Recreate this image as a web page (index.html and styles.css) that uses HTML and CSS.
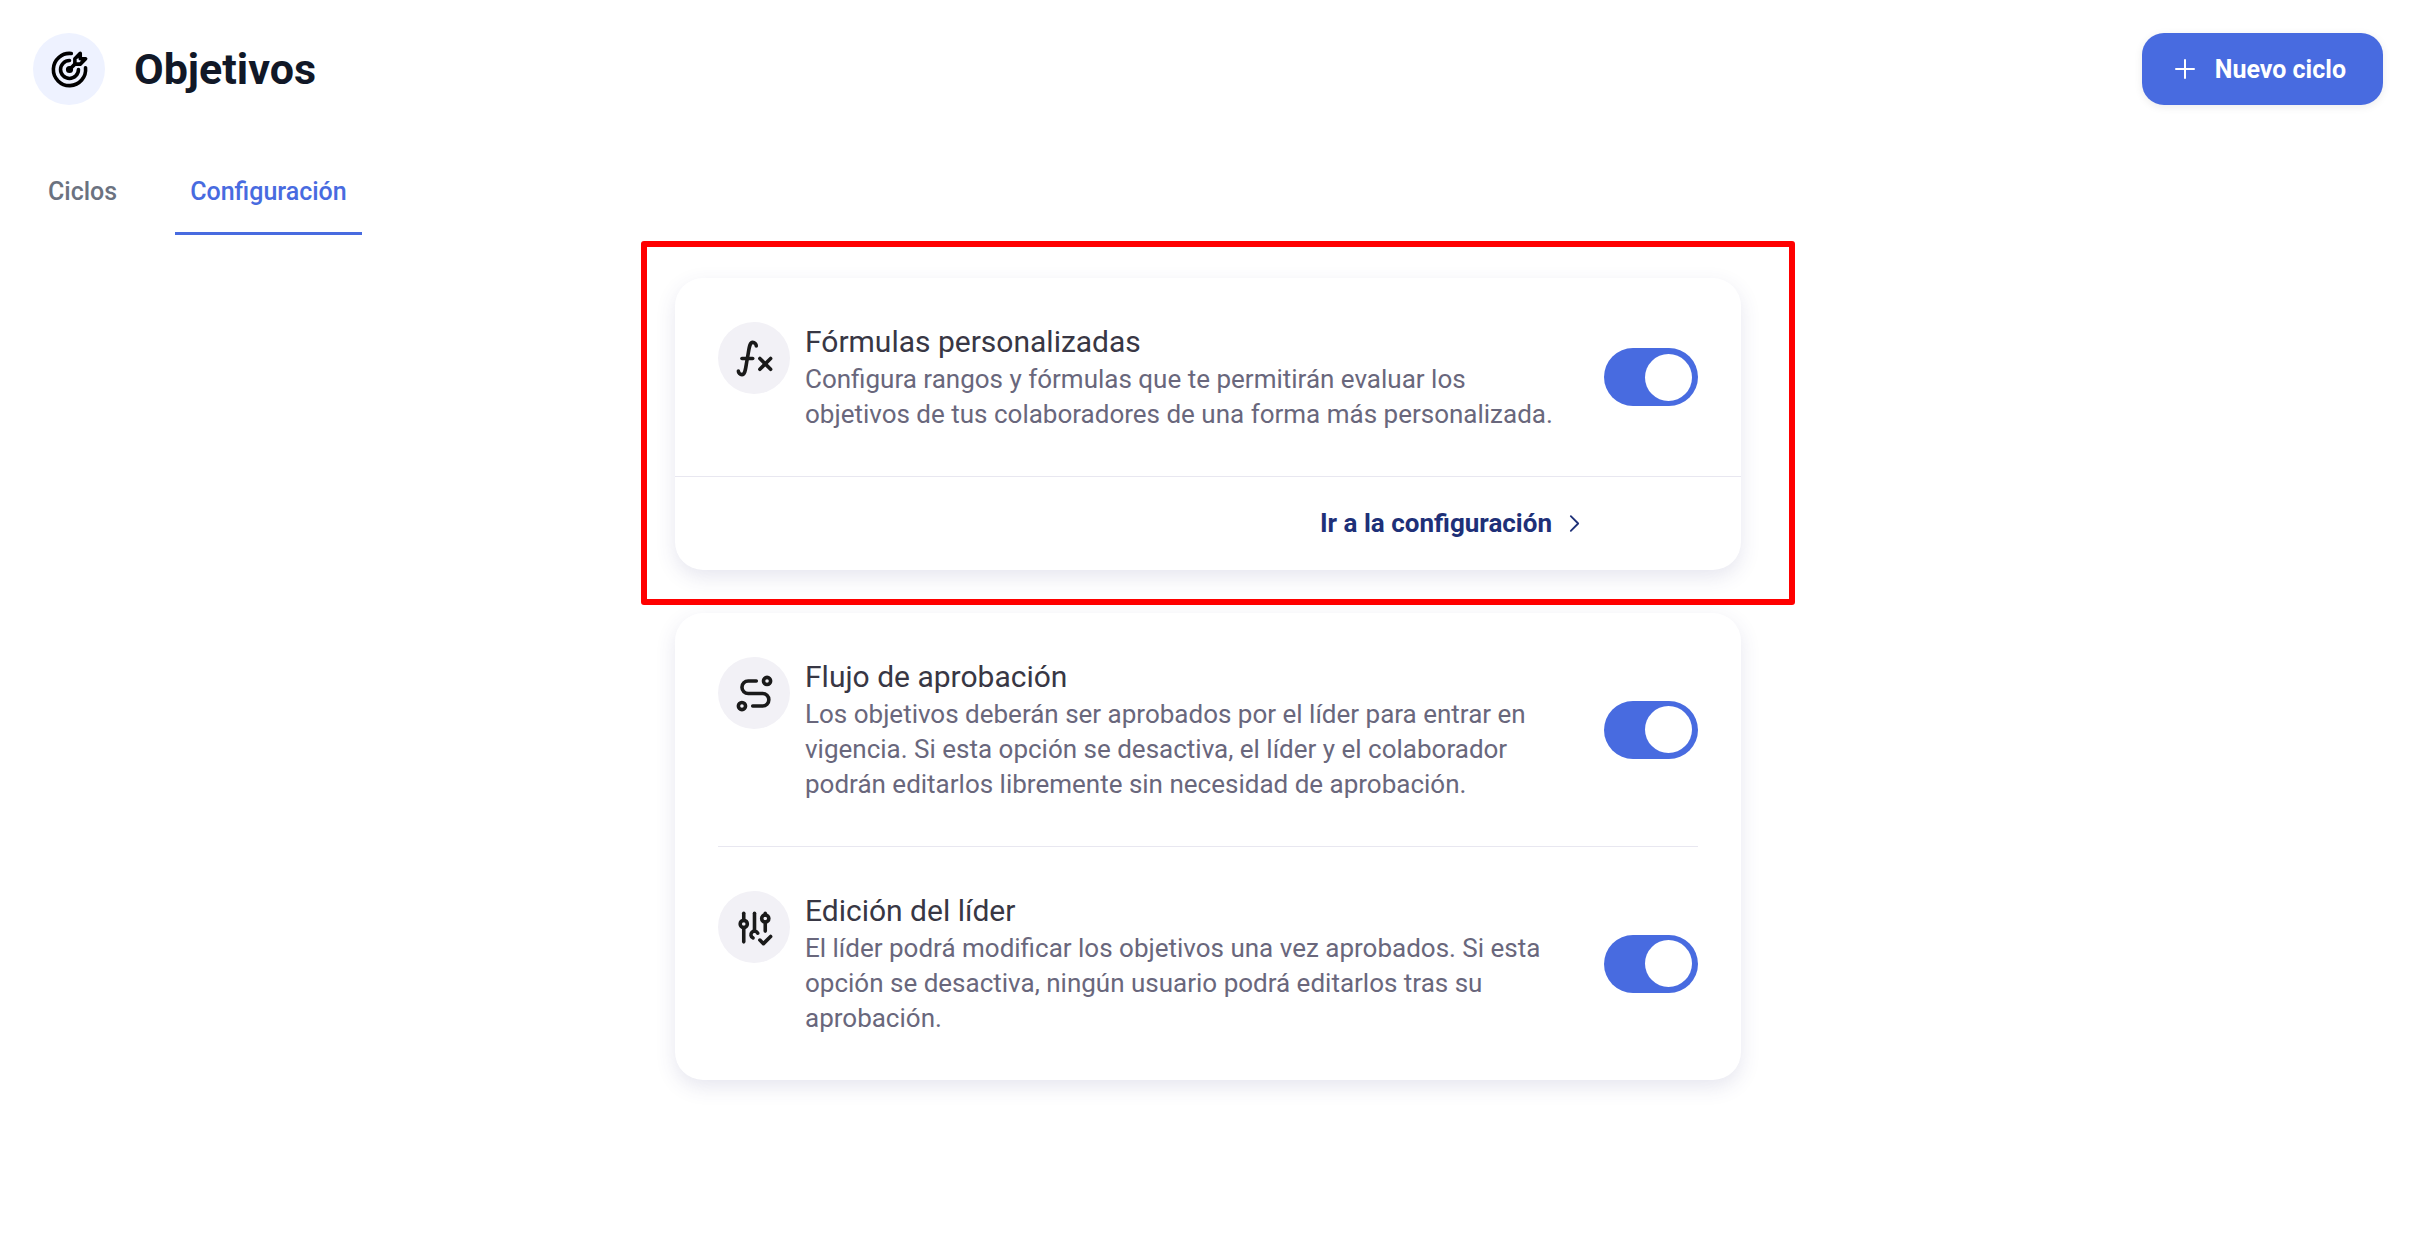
FILE: index.html
```html
<!DOCTYPE html>
<html lang="es">
<head>
    <meta charset="UTF-8">
    <meta name="viewport" content="width=device-width, initial-scale=1.0">
    <title>Objetivos</title>
    <link rel="stylesheet" href="styles.css">
</head>
<body>
    <header class="header">
        <div class="header-icon">
            <svg class="icon" viewBox="0 0 24 24">
                <path d="M11 12a1 1 0 1 0 2 0a1 1 0 1 0 -2 0"/>
                <path d="M12 7a5 5 0 1 0 5 5"/>
                <path d="M13 3.055a9 9 0 1 0 7.941 7.945"/>
                <path d="M15 6v3h3l3 -3h-3v-3z"/>
                <path d="M15 9l-3 3"/>
            </svg>
        </div>
        <h1>Objetivos</h1>
        <button class="new-btn" type="button">
            <svg class="plus" viewBox="0 0 20 20"><path d="M10 1v18M1 10h18"/></svg>
            Nuevo ciclo
        </button>
    </header>

    <nav class="tabs">
        <a class="tab" href="#ciclos">Ciclos</a>
        <a class="tab active" href="#configuracion">Configuración</a>
    </nav>

    <main class="content">
        <div class="highlight">
            <section class="card">
                <div class="row">
                    <div class="row-icon">
                        <svg class="icon" viewBox="0 0 24 24">
                            <path d="M3 19a2 2 0 0 0 2 2c2 0 2 -4 3 -9s1 -9 3 -9a2 2 0 0 1 2 2"/>
                            <path d="M5 12h6"/>
                            <path d="M15 12l6 6"/>
                            <path d="M15 18l6 -6"/>
                        </svg>
                    </div>
                    <div class="row-text">
                        <label class="row-title" for="formulas">Fórmulas personalizadas</label>
                        <p>Configura rangos y fórmulas que te permitirán evaluar los objetivos de tus colaboradores de una forma más personalizada.</p>
                    </div>
                    <input class="switch" type="checkbox" id="formulas" checked>
                </div>
                <div class="card-footer">
                    <a class="config-link" href="#formulas">
                        Ir a la configuración
                        <svg class="chevron" viewBox="0 0 12 20"><path d="M2 2l8 8l-8 8"/></svg>
                    </a>
                </div>
            </section>
        </div>

        <section class="card">
            <div class="row">
                <div class="row-icon">
                    <svg class="icon" viewBox="0 0 24 24">
                        <path d="M3 19a2 2 0 1 0 4 0a2 2 0 0 0 -4 0"/>
                        <path d="M17 5a2 2 0 1 0 4 0a2 2 0 0 0 -4 0"/>
                        <path d="M11 19h5.5a3.5 3.5 0 0 0 0 -7h-8a3.5 3.5 0 0 1 0 -7h4.5"/>
                    </svg>
                </div>
                <div class="row-text">
                    <label class="row-title" for="flujo">Flujo de aprobación</label>
                    <p>Los objetivos deberán ser aprobados por el líder para entrar en vigencia. Si esta opción se desactiva, el líder y el colaborador podrán editarlos libremente sin necesidad de aprobación.</p>
                </div>
                <input class="switch" type="checkbox" id="flujo" checked>
            </div>
            <hr>
            <div class="row">
                <div class="row-icon">
                    <svg class="icon" viewBox="0 0 24 24">
                        <path d="M4 10a2 2 0 1 0 4 0a2 2 0 0 0 -4 0"/>
                        <path d="M6 4v4"/>
                        <path d="M6 12v8"/>
                        <path d="M13.823 15.176a2 2 0 1 0 -2.638 2.651"/>
                        <path d="M12 4v10"/>
                        <path d="M16 7a2 2 0 1 0 4 0a2 2 0 0 0 -4 0"/>
                        <path d="M18 4v1"/>
                        <path d="M18 9v5"/>
                        <path d="M15 19l2 2l4 -4"/>
                    </svg>
                </div>
                <div class="row-text">
                    <label class="row-title" for="edicion">Edición del líder</label>
                    <p>El líder podrá modificar los objetivos una vez aprobados. Si esta opción se desactiva, ningún usuario podrá editarlos tras su aprobación.</p>
                </div>
                <input class="switch" type="checkbox" id="edicion" checked>
            </div>
        </section>
    </main>
</body>
</html>
```
FILE: styles.css
```css
* {
    box-sizing: border-box;
}

body {
    font-family: Roboto, 'Liberation Sans', sans-serif;
    font-size: 25px;
    margin: 0;
    padding: 33px 41px 33px 33px;
    background: #fff;
    color: #111827;
}

svg {
    fill: none;
    stroke: currentColor;
    stroke-width: 2;
    stroke-linecap: round;
    stroke-linejoin: round;
}

.header {
    display: flex;
    align-items: center;
}

.header-icon,
.row-icon {
    display: flex;
    align-items: center;
    justify-content: center;
    flex-shrink: 0;
    width: 72px;
    height: 72px;
    border-radius: 50%;
}

.header-icon {
    background: #eef2ff;
    color: #000;
}

.icon {
    width: 43px;
    height: 43px;
}

h1 {
    margin: 0 auto 0 29px;
    font-size: 43px;
    line-height: 48px;
    font-weight: 700;
}

.new-btn {
    display: flex;
    align-items: center;
    gap: 20px;
    height: 72px;
    padding: 0 37px 0 33px;
    border: none;
    border-radius: 22px;
    background: #486be0;
    color: #fff;
    font-family: inherit;
    font-size: 25px;
    font-weight: 700;
    box-shadow: 0 2px 8px rgba(0, 0, 0, 0.08);
    cursor: pointer;
}

.plus {
    width: 20px;
    height: 20px;
}

.tabs {
    display: flex;
    gap: 43px;
    margin-top: 58px;
}

.tab {
    padding: 14px 15px 26px;
    border-bottom: 3px solid transparent;
    border-radius: 3px 3px 0 0;
    line-height: 29px;
    font-weight: 500;
    color: #6b7280;
    text-decoration: none;
}

.tab.active {
    border-color: #486be0;
    color: #486be0;
}

.content {
    display: flex;
    flex-direction: column;
    gap: 43px;
    max-width: 1066px;
    margin: 43px auto 0;
}

/* red frame around the first card */
.highlight {
    position: relative;
}

.highlight::after {
    content: '';
    position: absolute;
    top: -37px;
    right: -54px;
    bottom: -35px;
    left: -34px;
    border: 6px solid #f00;
    border-radius: 3px;
    pointer-events: none;
}

.card {
    border-radius: 28px;
    background: #fff;
    box-shadow: 0 7px 20px rgba(60, 60, 130, 0.13);
}

.row {
    display: flex;
    align-items: flex-start;
    padding: 44px 43px;
}

.row-icon {
    margin-right: 15px;
    background: #f2f1f6;
    color: #1a1a1a;
}

.row-text {
    flex: 1;
}

.row-title {
    display: block;
    font-size: 30px;
    line-height: 40px;
    color: #383744;
}

.row-text p {
    margin: 0;
    font-size: 26px;
    line-height: 35px;
    color: #69677c;
}

.switch {
    appearance: none;
    display: flex;
    align-items: center;
    align-self: center;
    flex-shrink: 0;
    width: 94px;
    height: 58px;
    margin: 0 0 0 43px;
    padding: 0 6px;
    border-radius: 29px;
    background: #b5b4c1;
    cursor: pointer;
}

.switch::before {
    content: '';
    width: 47px;
    height: 47px;
    border-radius: 50%;
    background: #fff;
}

.switch:checked {
    justify-content: flex-end;
    background: #486be0;
}

hr {
    height: 1px;
    margin: 0 43px;
    border: none;
    background: #e8e7f0;
}

.card-footer {
    display: flex;
    justify-content: flex-end;
    padding: 29px 161px 29px 43px;
    border-top: 1px solid #e8e7f0;
}

.config-link {
    display: flex;
    align-items: center;
    gap: 17px;
    line-height: 35px;
    font-size: 26px;
    font-weight: 700;
    color: #1e3078;
    text-decoration: none;
}

.chevron {
    width: 11px;
    height: 19px;
}
```
